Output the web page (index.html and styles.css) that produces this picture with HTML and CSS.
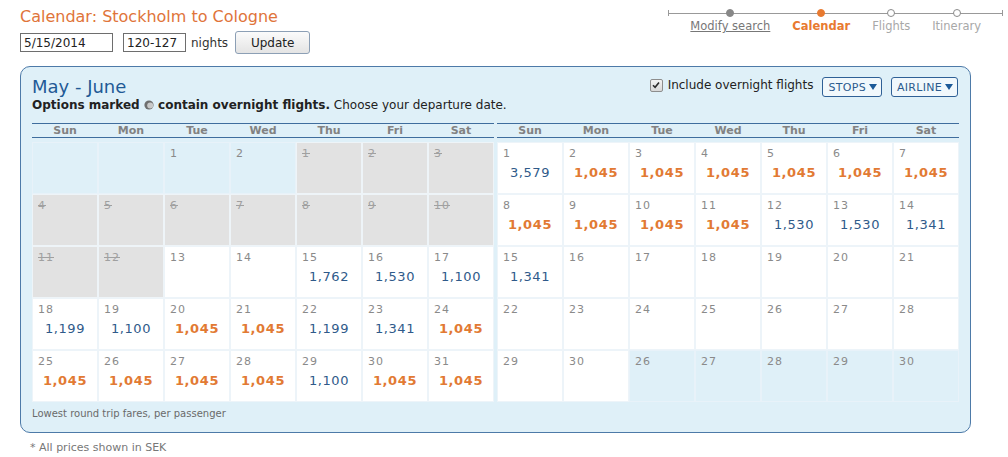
FILE: index.html
```html
<!DOCTYPE html>
<html lang="en">
    <head>
        <meta charset="utf-8">
        <title>Calendar: Stockholm to Cologne</title>
        <link rel="stylesheet" href="styles.css">
    </head>
    <body>
        <div class="page">
            <div class="top">
                <div class="search">
                    <h1 class="title">Calendar: Stockholm to Cologne</h1>
                    <form class="search-form" onsubmit="return false;">
                        <input type="text" class="field date" value="5/15/2014">
                        <input type="text" class="field nights" value="120-127">
                        <span class="nights-label">nights</span>
                        <button class="update">Update</button>
                    </form>
                </div>

                <!-- booking steps -->
                <div class="steps">
                    <div class="step done"><i class="dot"></i><a href="#">Modify search</a></div>
                    <div class="step current"><i class="dot"></i><span>Calendar</span></div>
                    <div class="step"><i class="dot"></i><span>Flights</span></div>
                    <div class="step"><i class="dot"></i><span>Itinerary</span></div>
                </div>
            </div>

            <div class="panel">
                <div class="panel-head">
                    <div>
                        <h2 class="months-title">May - June</h2>
                        <p class="hint"><b>Options marked <svg class="moon" width="10" height="10" viewBox="0 0 10 10"><circle cx="5" cy="5" r="4.6" fill="#6f6f6f"/><circle cx="6.2" cy="5.4" r="3" fill="#c9c9c9"/></svg> contain overnight flights.</b> Choose your departure date.</p>
                    </div>
                    <div class="filters">
                        <label class="overnight">
                            <span class="check"><svg width="8" height="8" viewBox="0 0 8 8"><path d="M1 4.2 L3.1 6.3 L7 1.4" fill="none" stroke="#2b2b2b" stroke-width="1.6"/></svg></span>
                            Include overnight flights
                        </label>
                        <button class="drop">STOPS<i class="tri"></i></button>
                        <button class="drop">AIRLINE<i class="tri"></i></button>
                    </div>
                </div>

                <div class="months">
                    <!-- May -->
                    <div class="month">
                        <div class="week-head">
                            <span>Sun</span><span>Mon</span><span>Tue</span><span>Wed</span><span>Thu</span><span>Fri</span><span>Sat</span>
                        </div>
                        <div class="days">
                            <div class="day off"></div>
                            <div class="day off"></div>
                            <div class="day off"><span class="num">1</span></div>
                            <div class="day off"><span class="num">2</span></div>
                            <div class="day past"><span class="num">1</span></div>
                            <div class="day past"><span class="num">2</span></div>
                            <div class="day past"><span class="num">3</span></div>

                            <div class="day past"><span class="num">4</span></div>
                            <div class="day past"><span class="num">5</span></div>
                            <div class="day past"><span class="num">6</span></div>
                            <div class="day past"><span class="num">7</span></div>
                            <div class="day past"><span class="num">8</span></div>
                            <div class="day past"><span class="num">9</span></div>
                            <div class="day past"><span class="num">10</span></div>

                            <div class="day past"><span class="num">11</span></div>
                            <div class="day past"><span class="num">12</span></div>
                            <div class="day"><span class="num">13</span></div>
                            <div class="day"><span class="num">14</span></div>
                            <div class="day"><span class="num">15</span><span class="fare">1,762</span></div>
                            <div class="day"><span class="num">16</span><span class="fare">1,530</span></div>
                            <div class="day"><span class="num">17</span><span class="fare">1,100</span></div>

                            <div class="day"><span class="num">18</span><span class="fare">1,199</span></div>
                            <div class="day"><span class="num">19</span><span class="fare">1,100</span></div>
                            <div class="day"><span class="num">20</span><span class="fare low">1,045</span></div>
                            <div class="day"><span class="num">21</span><span class="fare low">1,045</span></div>
                            <div class="day"><span class="num">22</span><span class="fare">1,199</span></div>
                            <div class="day"><span class="num">23</span><span class="fare">1,341</span></div>
                            <div class="day"><span class="num">24</span><span class="fare low">1,045</span></div>

                            <div class="day"><span class="num">25</span><span class="fare low">1,045</span></div>
                            <div class="day"><span class="num">26</span><span class="fare low">1,045</span></div>
                            <div class="day"><span class="num">27</span><span class="fare low">1,045</span></div>
                            <div class="day"><span class="num">28</span><span class="fare low">1,045</span></div>
                            <div class="day"><span class="num">29</span><span class="fare">1,100</span></div>
                            <div class="day"><span class="num">30</span><span class="fare low">1,045</span></div>
                            <div class="day"><span class="num">31</span><span class="fare low">1,045</span></div>
                        </div>
                    </div>

                    <!-- June -->
                    <div class="month">
                        <div class="week-head">
                            <span>Sun</span><span>Mon</span><span>Tue</span><span>Wed</span><span>Thu</span><span>Fri</span><span>Sat</span>
                        </div>
                        <div class="days">
                            <div class="day"><span class="num">1</span><span class="fare">3,579</span></div>
                            <div class="day"><span class="num">2</span><span class="fare low">1,045</span></div>
                            <div class="day"><span class="num">3</span><span class="fare low">1,045</span></div>
                            <div class="day"><span class="num">4</span><span class="fare low">1,045</span></div>
                            <div class="day"><span class="num">5</span><span class="fare low">1,045</span></div>
                            <div class="day"><span class="num">6</span><span class="fare low">1,045</span></div>
                            <div class="day"><span class="num">7</span><span class="fare low">1,045</span></div>

                            <div class="day"><span class="num">8</span><span class="fare low">1,045</span></div>
                            <div class="day"><span class="num">9</span><span class="fare low">1,045</span></div>
                            <div class="day"><span class="num">10</span><span class="fare low">1,045</span></div>
                            <div class="day"><span class="num">11</span><span class="fare low">1,045</span></div>
                            <div class="day"><span class="num">12</span><span class="fare">1,530</span></div>
                            <div class="day"><span class="num">13</span><span class="fare">1,530</span></div>
                            <div class="day"><span class="num">14</span><span class="fare">1,341</span></div>

                            <div class="day"><span class="num">15</span><span class="fare">1,341</span></div>
                            <div class="day"><span class="num">16</span></div>
                            <div class="day"><span class="num">17</span></div>
                            <div class="day"><span class="num">18</span></div>
                            <div class="day"><span class="num">19</span></div>
                            <div class="day"><span class="num">20</span></div>
                            <div class="day"><span class="num">21</span></div>

                            <div class="day"><span class="num">22</span></div>
                            <div class="day"><span class="num">23</span></div>
                            <div class="day"><span class="num">24</span></div>
                            <div class="day"><span class="num">25</span></div>
                            <div class="day"><span class="num">26</span></div>
                            <div class="day"><span class="num">27</span></div>
                            <div class="day"><span class="num">28</span></div>

                            <div class="day"><span class="num">29</span></div>
                            <div class="day"><span class="num">30</span></div>
                            <div class="day off"><span class="num">26</span></div>
                            <div class="day off"><span class="num">27</span></div>
                            <div class="day off"><span class="num">28</span></div>
                            <div class="day off"><span class="num">29</span></div>
                            <div class="day off"><span class="num">30</span></div>
                        </div>
                    </div>
                </div>

                <p class="note">Lowest round trip fares, per passenger</p>
            </div>

            <p class="foot">* All prices shown in SEK</p>
        </div>
    </body>
</html>
```

FILE: styles.css
```css
body {
    margin: 0;
    background: #fff;
    font-family: "DejaVu Sans", Verdana, sans-serif;
    color: #222;
}

.page {
    padding: 7px 0 0 20px;
}

/* header */
.top {
    display: flex;
    justify-content: space-between;
    align-items: flex-start;
}

.title {
    margin: 0;
    font-size: 16px;
    line-height: 20px;
    font-weight: normal;
    color: #e0743a;
}

.search-form {
    display: flex;
    align-items: center;
    margin-top: 4px;
    font-size: 12px;
    color: #333;
}

.field {
    box-sizing: border-box;
    height: 19px;
    padding: 0 3px;
    border: 1px solid #6e6e6e;
    font-family: inherit;
    font-size: 12px;
    color: #222;
}
.date { width: 93px; margin-right: 10px; }
.nights { width: 63px; margin-right: 5px; }

.nights-label {
    margin-right: 7px;
}

.update {
    width: 75px;
    height: 23px;
    border: 1px solid #8c9fb5;
    border-radius: 3px;
    background: linear-gradient(#fbfbfb, #e4e4e4);
    font-family: inherit;
    font-size: 12px;
    color: #222;
}

/* steps */
.steps {
    position: relative;
    display: flex;
    gap: 22px;
    margin: -7px 5px 0 0;
    padding: 0 22px;
    font-size: 11.5px;
}
.steps::before {
    content: "";
    position: absolute;
    left: 0;
    right: 0;
    top: 10px;
    height: 6px;
    border-left: 1px solid #999;
    border-right: 1px solid #999;
    background: linear-gradient(#999, #999) 0 3px / 100% 1px no-repeat;
}
.step {
    position: relative;
    display: flex;
    flex-direction: column;
    align-items: center;
    color: #a8a8a8;
}
.step .dot {
    box-sizing: border-box;
    flex-shrink: 0;
    width: 8px;
    height: 8px;
    margin: 9px 0 2px;
    border: 1px solid #8a8a8a;
    border-radius: 50%;
    background: #fff;
}
.step.done .dot { background: #888; border-color: #888; }
.step.done a { color: #777; }
.step.current .dot { background: #e87a30; border-color: #e87a30; }
.step.current { color: #e87a30; font-weight: bold; }

/* calendar panel */
.panel {
    width: fit-content;
    margin-top: 12px;
    padding: 10px 11px 11px 11px;
    border: 1px solid #4d7aa8;
    border-radius: 10px;
    background: #dff0f8;
}

.panel-head {
    display: flex;
    justify-content: space-between;
    align-items: flex-start;
}

.months-title {
    margin: 0;
    font-size: 18px;
    line-height: 20px;
    font-weight: normal;
    color: #1f5a96;
}

.hint {
    margin: 0;
    font-size: 12px;
    line-height: 16px;
    color: #222;
}
.moon {
    vertical-align: -1px;
}

.filters {
    display: flex;
    align-items: flex-start;
    gap: 9px;
    font-size: 12px;
    color: #222;
    margin-right: 1px;
}
.overnight {
    display: flex;
    align-items: center;
    gap: 5px;
    margin-top: 1px;
}
.check {
    box-sizing: border-box;
    display: flex;
    align-items: center;
    justify-content: center;
    width: 13px;
    height: 13px;
    border: 1px solid #8d8d8d;
    border-radius: 2px;
    background: linear-gradient(#f4f4f4, #d8d8d8);
}
.drop {
    display: flex;
    align-items: center;
    gap: 3px;
    height: 20px;
    padding: 0 4px 0 5px;
    border: 1px solid #2f6096;
    border-radius: 3px;
    background: #f1f8fc;
    font-family: inherit;
    font-size: 11px;
    letter-spacing: 0.3px;
    color: #2b5b8e;
}
.tri {
    width: 0;
    height: 0;
    border-left: 4px solid transparent;
    border-right: 4px solid transparent;
    border-top: 6px solid #1d5a98;
}

.months {
    display: flex;
    gap: 3px;
    margin-top: 10px;
}

.week-head {
    display: grid;
    grid-template-columns: repeat(7, 66px);
    height: 13px;
    border-top: 1px solid #3f6d9d;
    border-bottom: 1px solid #3f6d9d;
    font-size: 11px;
    line-height: 13px;
    font-weight: bold;
    color: #828282;
    text-align: center;
}

.days {
    display: grid;
    grid-template-columns: repeat(7, 66px);
    grid-auto-rows: 52px;
    margin-top: 4px;
}

.day {
    box-sizing: border-box;
    display: flex;
    flex-direction: column;
    padding: 4px 5px 0;
    border: 1px solid #edf4f9;
    background: #fff;
}
.day.off {
    background: #dff0f8;
    border-color: #e8f2f9;
}
.day.past {
    background: #e2e2e2;
    border-color: #eef4f8;
}

.num {
    font-size: 11px;
    line-height: 14px;
    letter-spacing: 1px;
    color: #8a8a8a;
}
.past .num {
    color: #a0a0a0;
    text-decoration: line-through;
}

.fare {
    margin-top: 4px;
    font-size: 13px;
    line-height: 16px;
    letter-spacing: 0.6px;
    text-align: center;
    color: #2f5a8a;
}
.fare.low {
    font-weight: bold;
    color: #e27a33;
}

.note {
    margin: 5px 0 0;
    font-size: 10px;
    line-height: 14px;
    color: #6a6a6a;
}

.foot {
    margin: 8px 0 0 10px;
    font-size: 11px;
    line-height: 14px;
    color: #777;
}
```
